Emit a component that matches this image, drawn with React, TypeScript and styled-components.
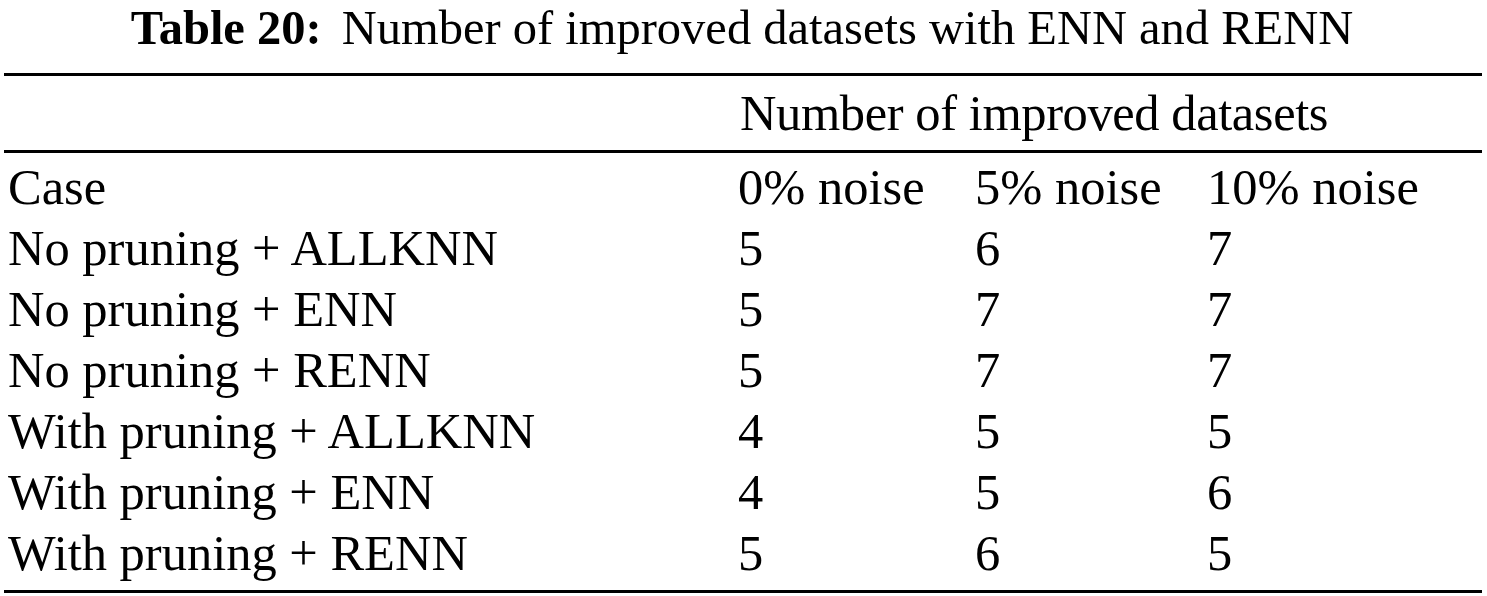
import React from "react";
import styled, { createGlobalStyle } from "styled-components";

const GlobalStyle = createGlobalStyle`
  html, body {
    margin: 0;
    padding: 0;
    background: #ffffff;
  }
  body {
    font-family: "Liberation Serif", "Times New Roman", serif;
    color: #000;
  }
`;

const Page = styled.div`
  width: 1487px;
  height: 596px;
  padding: 0 5px 0 4px;
  box-sizing: border-box;
  overflow: hidden;
`;

const Caption = styled.div`
  text-align: center;
  font-size: 48.5px;
  line-height: 56px;
  height: 73px;
  padding-right: 2px;
  white-space: nowrap;
`;

const Label = styled.span`
  font-weight: bold;
  margin-right: 20px;
`;

const Rule = styled.div`
  height: 3px;
  background: #000;
`;

const Grid = styled.div`
  display: grid;
  grid-template-columns: 730px 237px 232px 1fr;
  padding-left: 4px;
  font-size: 50.5px;
`;

const SpanHead = styled.div`
  grid-column: 2 / 5;
  line-height: 74px;
  padding-left: 2px;
  letter-spacing: -0.4px;
`;

const Cell = styled.div`
  line-height: 61px;
  white-space: nowrap;
`;

const Body = styled(Grid)`
  padding-top: 4px;
  padding-bottom: 6px;
`;

const rows: [string, string, string, string][] = [
  ["Case", "0% noise", "5% noise", "10% noise"],
  ["No pruning + ALLKNN", "5", "6", "7"],
  ["No pruning + ENN", "5", "7", "7"],
  ["No pruning + RENN", "5", "7", "7"],
  ["With pruning + ALLKNN", "4", "5", "5"],
  ["With pruning + ENN", "4", "5", "6"],
  ["With pruning + RENN", "5", "6", "5"],
];

const App: React.FC = () => (
  <Page>
    <GlobalStyle />
    <Caption>
      <Label>Table 20:</Label>Number of improved datasets with ENN and RENN
    </Caption>
    <Rule />
    <Grid>
      <SpanHead>Number of improved datasets</SpanHead>
    </Grid>
    <Rule />
    <Body>
      {rows.map((r) => r.map((c, i) => <Cell key={r[0] + i}>{c}</Cell>))}
    </Body>
    <Rule />
  </Page>
);

export default App;
